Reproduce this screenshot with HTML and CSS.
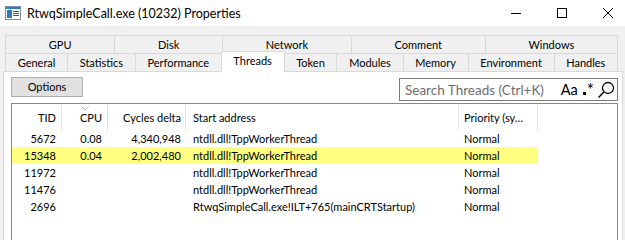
FILE: index.html
```html
<!DOCTYPE html>
<html>
<head>
<meta charset="utf-8">
<link rel="stylesheet" href="styles.css">
</head>
<body>
<div class="window">
  <div class="titlebar">
    <svg class="app-icon" width="16" height="14" viewBox="0 0 16 14">
      <rect x="0.5" y="0.5" width="15" height="13" fill="#fff" stroke="#7b8fa8"/>
      <rect x="1" y="1" width="14" height="2" fill="#2b79c9"/>
      <rect x="2" y="4" width="5" height="8" fill="#2b79c9"/>
      <rect x="8" y="5" width="6" height="1" fill="#555"/>
      <rect x="8" y="7" width="6" height="1" fill="#555"/>
      <rect x="8" y="9" width="6" height="1" fill="#555"/>
    </svg>
    <span class="title">RtwqSimpleCall.exe (10232) Properties</span>
    <div class="controls">
      <div class="ctl"><svg width="10" height="10" viewBox="0 0 10 10"><line x1="0" y1="5.5" x2="10" y2="5.5" stroke="#000" stroke-width="1"/></svg></div>
      <div class="ctl"><svg width="10" height="10" viewBox="0 0 10 10"><rect x="0.5" y="0.5" width="9" height="9" fill="none" stroke="#000" stroke-width="1"/></svg></div>
      <div class="ctl"><svg width="10" height="10" viewBox="0 0 10 10"><path d="M0 0L10 10M10 0L0 10" stroke="#000" stroke-width="1"/></svg></div>
    </div>
  </div>
  <div class="main">
    <div class="tabs">
      <div class="tabrow">
        <div class="tab">GPU</div>
        <div class="tab">Disk</div>
        <div class="tab">Network</div>
        <div class="tab">Comment</div>
        <div class="tab">Windows</div>
      </div>
      <div class="tabrow">
        <div class="tab">General</div>
        <div class="tab">Statistics</div>
        <div class="tab">Performance</div>
        <div class="tab sel">Threads</div>
        <div class="tab">Token</div>
        <div class="tab">Modules</div>
        <div class="tab">Memory</div>
        <div class="tab">Environment</div>
        <div class="tab">Handles</div>
      </div>
    </div>
    <div class="panel">
      <div class="toolbar">
        <div class="btn">Options</div>
        <div class="search">
          <span class="placeholder">Search Threads (Ctrl+K)</span>
          <span class="sicons">
            <span class="aa">Aa</span>
            <span class="regex"><span class="dot"></span>*</span>
            <svg class="mag" width="18" height="18" viewBox="0 0 18 18"><circle cx="11" cy="7" r="5.5" fill="none" stroke="#000" stroke-width="1.3"/><line x1="7" y1="11" x2="1.5" y2="16.5" stroke="#000" stroke-width="1.5"/></svg>
          </span>
        </div>
      </div>
      <div class="list">
        <div class="row header">
          <div class="c tid">TID</div>
          <div class="c cpu">CPU<svg class="sort" width="8" height="5" viewBox="0 0 8 5"><polyline points="0.5,0.5 4,4 7.5,0.5" fill="none" stroke="#a8a8a8" stroke-width="1"/></svg></div>
          <div class="c cyc">Cycles delta</div>
          <div class="c addr">Start address</div>
          <div class="c prio">Priority (sy…</div>
        </div>
        <div class="row">
          <div class="c tid">5672</div><div class="c cpu">0.08</div><div class="c cyc">4,340,948</div><div class="c addr">ntdll.dll!TppWorkerThread</div><div class="c prio">Normal</div>
        </div>
        <div class="row hl">
          <div class="c tid">15348</div><div class="c cpu">0.04</div><div class="c cyc">2,002,480</div><div class="c addr">ntdll.dll!TppWorkerThread</div><div class="c prio">Normal</div>
        </div>
        <div class="row">
          <div class="c tid">11972</div><div class="c cpu"></div><div class="c cyc"></div><div class="c addr">ntdll.dll!TppWorkerThread</div><div class="c prio">Normal</div>
        </div>
        <div class="row">
          <div class="c tid">11476</div><div class="c cpu"></div><div class="c cyc"></div><div class="c addr">ntdll.dll!TppWorkerThread</div><div class="c prio">Normal</div>
        </div>
        <div class="row">
          <div class="c tid">2696</div><div class="c cpu"></div><div class="c cyc"></div><div class="c addr">RtwqSimpleCall.exe!ILT+765(mainCRTStartup)</div><div class="c prio">Normal</div>
        </div>
      </div>
    </div>
  </div>
</div>
</body>
</html>
```

FILE: styles.css
```css
html, body {
  margin: 0;
  padding: 0;
}
body {
  width: 625px;
  height: 240px;
  overflow: hidden;
  font-family: Lato, "Noto Sans", sans-serif;
  font-size: 11px;
  color: #000;
  background: #fff;
}
.window {
  display: flex;
  flex-direction: column;
  height: 240px;
}
.titlebar {
  height: 26px;
  display: flex;
  align-items: center;
  background: #fff;
}
.app-icon {
  margin-left: 5px;
  flex: none;
}
.title {
  margin-left: 6px;
  font-size: 12.5px;
  flex: 1;
}
.controls {
  display: flex;
  margin-right: -6px;
  align-self: stretch;
}
.ctl {
  width: 46px;
  display: flex;
  align-items: center;
  justify-content: center;
}
.main {
  flex: 1;
  background: #f0f0f0;
  display: flex;
  flex-direction: column;
  min-height: 0;
}
.tabs {
  padding-top: 9px;
}
.tabrow {
  display: flex;
  height: 18px;
  margin: 0 7px 0 5px;
}
.tab {
  flex: 1 1 auto;
  border: 1px solid #d9d9d9;
  border-bottom: none;
  margin-left: -1px;
  text-align: center;
  line-height: 17px;
  background: #f0f0f0;
  white-space: nowrap;
  padding: 0 4px;
}
.tab:first-child {
  margin-left: 0;
}
.tab.sel {
  background: #fff;
  margin-top: -2px;
  margin-bottom: -1px;
  position: relative;
  z-index: 1;
  line-height: 18px;
}
.panel {
  flex: 1;
  margin: 0 2px 0 3px;
  border: 1px solid #d9d9d9;
  border-bottom: none;
  background: #fff;
  padding: 5px 4px 0 7px;
  display: flex;
  flex-direction: column;
  min-height: 0;
}
.toolbar {
  display: flex;
  justify-content: space-between;
  align-items: flex-start;
  height: 24px;
  margin-bottom: 2px;
}
.btn {
  width: 70px;
  height: 18px;
  background: #e1e1e1;
  border: 1px solid #adadad;
  text-align: center;
  line-height: 18px;
}
.search {
  margin-top: 1px;
  width: 212px;
  height: 21px;
  border: 1px solid #7a7a7a;
  display: flex;
  align-items: center;
  padding-left: 5px;
  box-sizing: content-box;
}
.placeholder {
  color: #6d6d6d;
  font-size: 13.5px;
  flex: 1;
  white-space: nowrap;
}
.sicons {
  display: flex;
  align-items: center;
  margin-right: 2px;
}
.aa {
  font-size: 14.5px;
  margin-right: 5px;
}
.regex {
  display: flex;
  align-items: flex-start;
  font-size: 17px;
  line-height: 16px;
  margin-right: 3px;
  height: 15px;
}
.regex .dot {
  width: 3px;
  height: 3px;
  background: #000;
  margin-top: 10px;
  margin-right: 1px;
}
.list {
  flex: 1;
  border: 1px solid #828790;
  border-bottom: none;
  background: #fff;
}
.row {
  display: grid;
  grid-template-columns: 50px 46px 78px 273px 79px;
  width: 526px;
  height: 17px;
  line-height: 17px;
  white-space: nowrap;
}
.row.header {
  height: 26px;
  line-height: 24px;
}
.row.header .c {
  border-right: 1px solid #e5e5e5;
  position: relative;
  padding-top: 2px;
}
.row.hl {
  background: #ffff80;
}
.c {
  overflow: hidden;
}
.tid {
  text-align: right;
  padding-right: 6px;
}
.cpu {
  text-align: right;
  padding-right: 6px;
}
.cyc {
  text-align: right;
  padding-right: 5px;
}
.addr {
  padding-left: 7px;
}
.prio {
  padding-left: 5px;
}
.row.header .tid { padding-right: 5px; }
.row.header .cpu { padding-right: 5px; }
.row.header .cyc { padding-right: 4px; }
.sort {
  position: absolute;
  left: 19px;
  top: 2px;
}
```
